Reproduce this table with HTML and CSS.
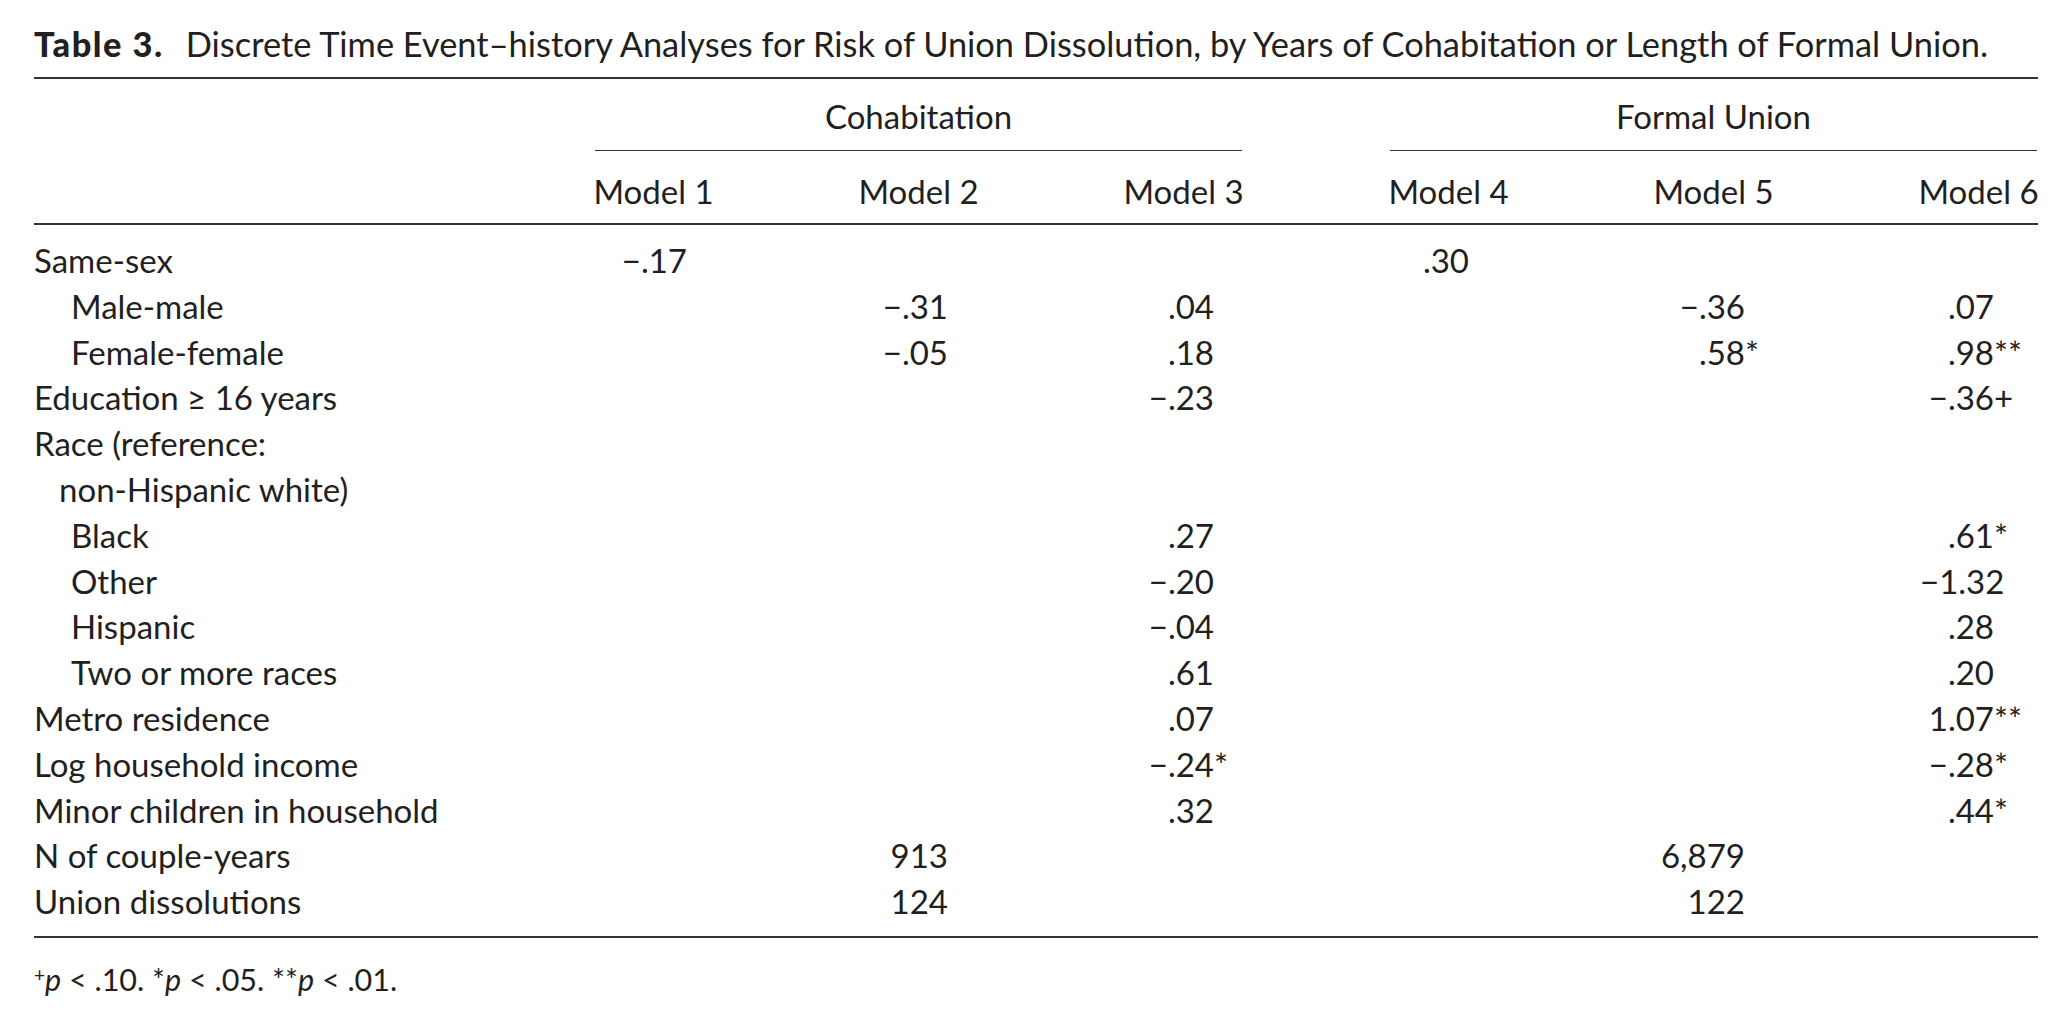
FILE: index.html
```html
<!DOCTYPE html>
<html lang="en">
<head>
<meta charset="utf-8">
<title>Table 3</title>
<link rel="stylesheet" href="styles.css">
</head>
<body>
<div class="page">
  <p class="caption"><b class="label">Table 3.</b>Discrete Time Event–history Analyses for Risk of Union Dissolution, by Years of Cohabitation or Length of Formal Union.</p>
  <div class="table">
    <div class="row group-row">
      <div class="cell"></div>
      <div class="group">Cohabitation</div>
      <div class="group">Formal Union</div>
    </div>
    <div class="row model-row">
      <div class="cell"></div>
      <div class="model">Model 1</div>
      <div class="model">Model 2</div>
      <div class="model">Model 3</div>
      <div class="model">Model 4</div>
      <div class="model">Model 5</div>
      <div class="model">Model 6</div>
    </div>
    <div class="tbody">
      <div class="row"><div class="name">Same-sex</div><div class="v">−.17</div><div class="v"></div><div class="v"></div><div class="v">.30</div><div class="v"></div><div class="v"></div></div>
      <div class="row"><div class="name sub">Male-male</div><div class="v"></div><div class="v">−.31</div><div class="v">.04</div><div class="v"></div><div class="v">−.36</div><div class="v">.07</div></div>
      <div class="row"><div class="name sub">Female-female</div><div class="v"></div><div class="v">−.05</div><div class="v">.18</div><div class="v"></div><div class="v">.58<span class="sig">*</span></div><div class="v">.98<span class="sig">**</span></div></div>
      <div class="row"><div class="name">Education ≥ 16 years</div><div class="v"></div><div class="v"></div><div class="v">−.23</div><div class="v"></div><div class="v"></div><div class="v">−.36<span class="sig">+</span></div></div>
      <div class="row"><div class="name wrap">Race (reference:<br>non-Hispanic white)</div><div class="v"></div><div class="v"></div><div class="v"></div><div class="v"></div><div class="v"></div><div class="v"></div></div>
      <div class="row"><div class="name sub">Black</div><div class="v"></div><div class="v"></div><div class="v">.27</div><div class="v"></div><div class="v"></div><div class="v">.61<span class="sig">*</span></div></div>
      <div class="row"><div class="name sub">Other</div><div class="v"></div><div class="v"></div><div class="v">−.20</div><div class="v"></div><div class="v"></div><div class="v">−1.32</div></div>
      <div class="row"><div class="name sub">Hispanic</div><div class="v"></div><div class="v"></div><div class="v">−.04</div><div class="v"></div><div class="v"></div><div class="v">.28</div></div>
      <div class="row"><div class="name sub">Two or more races</div><div class="v"></div><div class="v"></div><div class="v">.61</div><div class="v"></div><div class="v"></div><div class="v">.20</div></div>
      <div class="row"><div class="name">Metro residence</div><div class="v"></div><div class="v"></div><div class="v">.07</div><div class="v"></div><div class="v"></div><div class="v">1.07<span class="sig">**</span></div></div>
      <div class="row"><div class="name">Log household income</div><div class="v"></div><div class="v"></div><div class="v">−.24<span class="sig">*</span></div><div class="v"></div><div class="v"></div><div class="v">−.28<span class="sig">*</span></div></div>
      <div class="row"><div class="name">Minor children in household</div><div class="v"></div><div class="v"></div><div class="v">.32</div><div class="v"></div><div class="v"></div><div class="v">.44<span class="sig">*</span></div></div>
      <div class="row"><div class="name">N of couple-years</div><div class="v"></div><div class="v">913</div><div class="v"></div><div class="v"></div><div class="v">6,879</div><div class="v"></div></div>
      <div class="row"><div class="name">Union dissolutions</div><div class="v"></div><div class="v">124</div><div class="v"></div><div class="v"></div><div class="v">122</div><div class="v"></div></div>
    </div>
  </div>
  <p class="note"><sup class="plus">+</sup><i>p</i> &lt; .10. <span class="star">*</span><i>p</i> &lt; .05. <span class="star">**</span><i>p</i> &lt; .01.</p>
</div>
</body>
</html>
```

FILE: styles.css
```css
html, body {
  margin: 0;
  padding: 0;
  background: #ffffff;
}

body {
  font-family: "Lato", "Open Sans", sans-serif;
  font-size: 33px;
  color: #231f20;
}

.page {
  width: 2004px;
  padding-left: 34px;
}

.caption {
  margin: 21px 0 10px 0;
  font-size: 34.4px;
  line-height: 46px;
  white-space: nowrap;
}

.caption .label {
  font-weight: 900;
  letter-spacing: 1.5px;
  margin-right: 22px;
}

.table {
  border-top: 2px solid #333333;
  border-bottom: 2px solid #333333;
}

.row {
  display: grid;
  grid-template-columns: 413px repeat(6, 117px);
  column-gap: 148px;
  line-height: 45.8px;
}

.group-row {
  padding-top: 14px;
}

.group {
  grid-column: span 3;
  text-align: center;
  line-height: 46px;
  padding-bottom: 11px;
  border-bottom: 1.5px solid #333333;
}

.model-row {
  padding-top: 17px;
  padding-bottom: 9px;
  border-bottom: 2px solid #333333;
}

.model {
  text-align: center;
  white-space: nowrap;
  line-height: 46px;
  margin: 0 -10px;
}

.tbody {
  padding-top: 13px;
  padding-bottom: 11px;
}

.name {
  white-space: nowrap;
}

.name.sub {
  padding-left: 37px;
}

.name.wrap {
  padding-left: 25px;
  text-indent: -25px;
}

.v {
  text-align: right;
  white-space: nowrap;
  padding-right: 28px;
}

.tbody .row .v:nth-child(2) { padding-right: 25px; }
.tbody .row .v:nth-child(3) { padding-right: 29px; }
.tbody .row .v:nth-child(4) { padding-right: 28px; }
.tbody .row .v:nth-child(5) { padding-right: 38px; }
.tbody .row .v:nth-child(6) { padding-right: 27px; }
.tbody .row .v:nth-child(7) { padding-right: 43px; }

.sig {
  display: inline-block;
  width: 0;
  text-align: left;
  line-height: 0;
}

.note {
  margin: 18px 0 0 0;
  font-size: 30.5px;
  line-height: 46px;
}

.note .plus {
  font-size: 19px;
  vertical-align: 9px;
  line-height: 0;
}
```
